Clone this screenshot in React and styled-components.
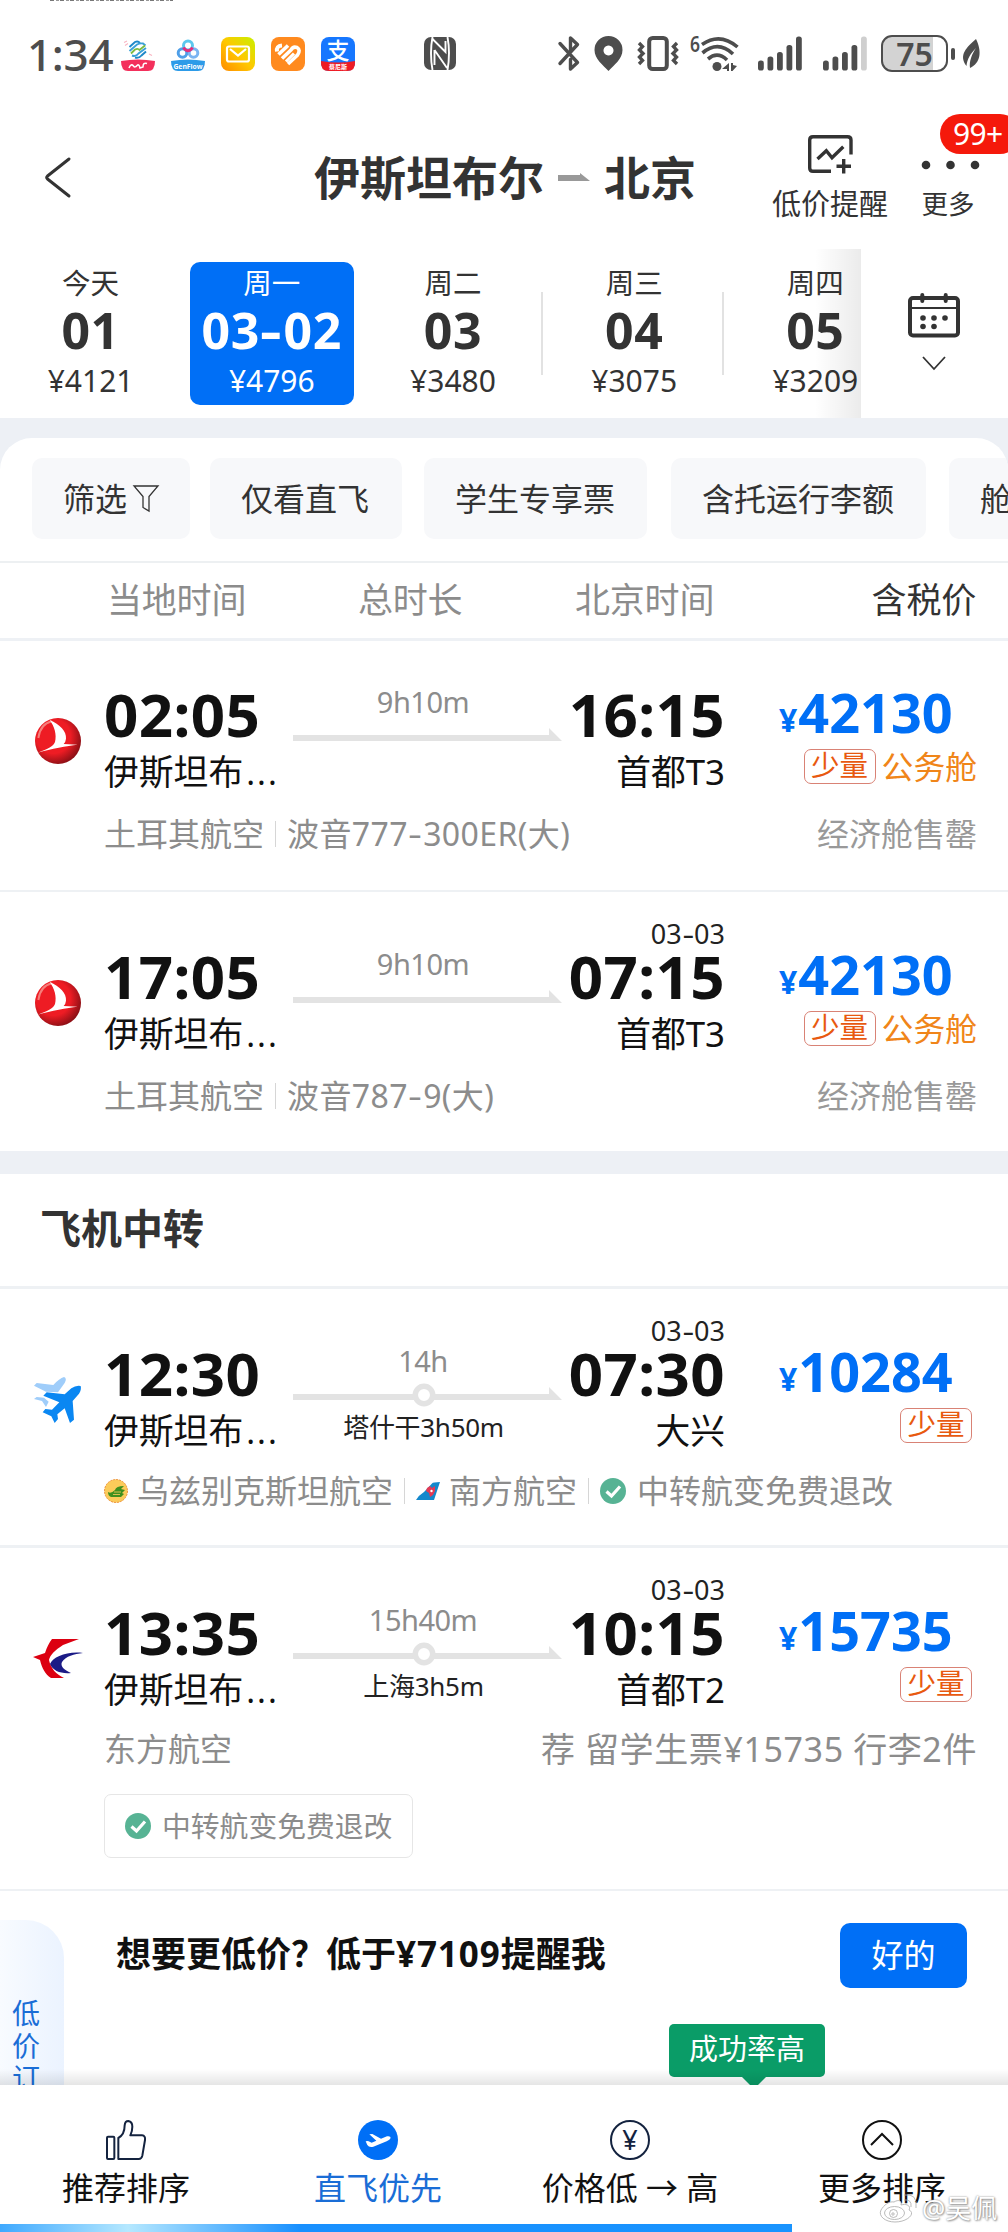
import React from 'react'
import styled, { createGlobalStyle } from 'styled-components'

const GlobalStyle = createGlobalStyle`
  * { box-sizing: border-box; }
  body {
    margin: 0;
    background: #fff;
    font-family: "Noto Sans", "Noto Sans CJK SC", sans-serif;
  }
  svg { display: block; flex: none; overflow: visible; }
`

const Page = styled.div`
  width: 1008px;
  height: 2232px;
  overflow: hidden;
  display: flex;
  flex-direction: column;
  background: #fff;
  color: #111;
  white-space: nowrap;
`

/* ---------- status bar ---------- */

const TopSliver = styled.div`
  width: 123px;
  height: 1px;
  margin-left: 50px;
  background: repeating-linear-gradient(90deg, #777 0 4px, #fff 4px 6px, #999 6px 9px, #fff 9px 10px);
`

const StatusBar = styled.div`
  height: 105px;
  padding: 0 28px 0 27px;
  display: flex;
  align-items: center;
  color: #4d4d4d;
`

const Clock = styled.div`
  width: 94px;
  font-size: 44px;
  font-weight: 500;
  line-height: 60px;
  letter-spacing: -0.3px;
`

const AppIcons = styled.div`
  display: flex;
  gap: 16px;
`

const Push = styled.div`
  margin-left: ${p => p.$left}px;
`

const Battery = styled.div`
  width: 67px;
  height: 37px;
  margin-left: 14px;
  border: 2.5px solid #4d4d4d;
  border-radius: 11px;
  background: linear-gradient(90deg, #d3d3d3 50px, #fff 50px);
  display: flex;
  align-items: center;
  justify-content: center;
  font-size: 32px;
  font-weight: 600;
  line-height: 32px;
`

const BatteryNub = styled.div`
  width: 4px;
  height: 12px;
  margin: 0 7px 0 3px;
  border-radius: 2px;
  background: #4d4d4d;
`

/* ---------- header ---------- */

const Header = styled.div`
  height: 143px;
  display: grid;
  grid-template-columns: 314px 382px 1fr;
`

const Back = styled.div`
  padding: 51px 0 0 45px;
`

const Title = styled.div`
  height: 142px;
  display: flex;
  align-items: center;
  gap: 14px;
  font-size: 46px;
  font-weight: 700;
  line-height: 60px;
  color: #333;
`

const Actions = styled.div`
  display: flex;
  padding: 28px 0 0 76px;
  color: #333;
`

const Action = styled.div`
  position: relative;
  width: ${p => p.$width}px;
  margin-right: 29px;
  display: flex;
  flex-direction: column;
  align-items: center;
  font-size: ${p => p.$size}px;
  line-height: 40px;
`

const ActionIcon = styled.div`
  height: 40px;
  margin-bottom: 10px;
  display: flex;
  align-items: center;
`

const Badge = styled.div`
  position: absolute;
  left: 23px;
  top: -20px;
  width: 80px;
  height: 40px;
  padding-left: 13px;
  border-radius: 20px;
  background: #f5190b;
  color: #fff;
  font-size: 30px;
  line-height: 40px;
  letter-spacing: -0.7px;
`

/* ---------- dates ---------- */

const DateStrip = styled.div`
  height: 169px;
  display: flex;
`

const Days = styled.div`
  position: relative;
  width: 861px;
  overflow: hidden;
  display: flex;
  &::after {
    content: '';
    position: absolute;
    right: 0;
    top: 0;
    width: 46px;
    height: 169px;
    background: linear-gradient(90deg, rgba(0, 0, 0, 0), rgba(0, 0, 0, 0.08));
  }
`

const DayCell = styled.div`
  flex: none;
  width: 181.2px;
  padding-top: 13px;
  display: flex;
  justify-content: center;
`

const Day = styled.div`
  width: 164px;
  height: 143px;
  border-radius: 10px;
  background: ${p => (p.$active ? '#006ff6' : 'transparent')};
  color: ${p => (p.$active ? '#fff' : '#333')};
  text-align: center;
`

const DayDivider = styled.div`
  flex: none;
  width: 2px;
  height: 83px;
  margin: 43px 1px 0 -3px;
  background: #e2e2e2;
`

const Weekday = styled.div`
  font-size: 28.5px;
  line-height: 42px;
`

const DayNumber = styled.div`
  font-size: 50px;
  font-weight: 700;
  line-height: 52px;
  letter-spacing: 0.6px;
`

const DayPrice = styled.div`
  font-size: 30px;
  line-height: 50px;
`

const Dash = styled.span`
  display: inline-block;
  transform: scaleX(1.35);
  margin: 0 0.07em;
`

const CalendarButton = styled.div`
  width: 147px;
  padding: 44px 2px 0 0;
  display: flex;
  flex-direction: column;
  align-items: center;
  gap: 18px;
`

/* ---------- filters ---------- */

const Backdrop = styled.div`
  padding-top: 20px;
  background: #edf0f5;
`

const Filters = styled.div`
  height: 125px;
  padding: 20px 0 0 32px;
  display: flex;
  overflow: hidden;
  background: #fff;
  border-radius: 32px 32px 0 0;
  border-bottom: 2px solid #edf0f2;
`

const Chip = styled.div`
  flex: none;
  width: ${p => p.$width}px;
  height: 81px;
  margin-right: ${p => p.$gap}px;
  padding-left: 31px;
  display: flex;
  align-items: center;
  gap: 6px;
  border-radius: 10px;
  background: #f7f8fa;
  color: #333;
  font-size: 32px;
  line-height: 80px;
`

const Columns = styled.div`
  height: 78px;
  padding: 0 32px 0 107px;
  display: grid;
  grid-template-columns: 251px 217px 1fr auto;
  border-bottom: 3px solid #eef1f5;
  font-size: 35px;
  line-height: 74px;
  letter-spacing: -0.2px;
  color: #8c8c8c;
`

const PriceHead = styled.span`
  color: #333;
`

/* ---------- flights ---------- */

const Flight = styled.div`
  height: ${p => p.$height}px;
  padding: ${p => p.$top}px 31px 0 0;
  border-bottom: ${p => p.$line}px solid #eef1f4;
`

const Main = styled.div`
  display: flex;
  height: 141px;
`

const LogoBox = styled.div`
  width: 104px;
  height: 141px;
  padding: 25px 0 0 11px;
  display: flex;
  align-items: center;
  justify-content: center;
`

const Depart = styled.div`
  width: 189px;
  padding-top: 27px;
`

const Arrive = styled.div`
  width: 164px;
  text-align: right;
`

const ArriveDate = styled.div`
  height: 27px;
  font-size: 27px;
  line-height: 28px;
  color: #222;
`

const Time = styled.div`
  font-size: 60px;
  font-weight: 700;
  line-height: 59px;
  letter-spacing: 0.4px;
`

const City = styled.div`
  font-size: 34.8px;
  line-height: 55px;
`

const Dots = styled.span`
  margin-left: 3px;
  font-size: 33px;
  letter-spacing: 2px;
`

const Route = styled.div`
  width: 268px;
  padding-top: 29px;
`

const Duration = styled.div`
  padding-right: 8px;
  font-size: 29px;
  line-height: 30px;
  letter-spacing: -0.5px;
  text-align: center;
  color: #8c8c8c;
`

const Stop = styled.div`
  padding-right: 7px;
  font-size: 26px;
  line-height: 34px;
  letter-spacing: -0.3px;
  text-align: center;
  color: #222;
`

const Cost = styled.div`
  flex: 1;
  padding: 24px 0 0 54px;
`

const Price = styled.div`
  font-size: 54px;
  font-weight: 700;
  line-height: 60px;
  color: #006ff6;
`

const Yen = styled.span`
  position: relative;
  top: -1px;
  margin-right: 1px;
  font-size: 32px;
  line-height: 1;
`

const Tags = styled.div`
  height: 35px;
  margin: 7px ${p => p.$right}px 0 0;
  display: flex;
  justify-content: flex-end;
  align-items: center;
  gap: 6px;
  font-size: 31.8px;
  line-height: 32px;
  color: #f08519;
`

const Few = styled.span`
  width: 72px;
  height: 35px;
  border: 1px solid #d98275;
  border-radius: 7px;
  font-size: 28.5px;
  line-height: 31px;
  text-align: center;
  color: #e8590f;
`

const Detail = styled.div`
  margin: ${p => p.$gap}px 0 0 104px;
  height: 40px;
  display: flex;
  align-items: center;
  font-size: 32px;
  line-height: 40px;
  color: #8c8c8c;
`

const Aircraft = styled.span`
  letter-spacing: 0.4px;
`

const Bar = styled.i`
  width: 1px;
  height: 26px;
  margin: 0 ${p => p.$side}px;
  background: #d6d6d6;
`

const Gap = styled.span`
  width: ${p => p.$w}px;
`

const Right = styled.span`
  margin-left: auto;
  font-size: ${p => p.$size || 32}px;
  letter-spacing: ${p => p.$track || 0}px;
  color: ${p => p.$color || '#8c8c8c'};
`

const Guarantee = styled.div`
  width: 309px;
  height: 64px;
  margin: 25px 0 0 104px;
  padding-left: 20px;
  display: flex;
  align-items: center;
  gap: 11px;
  border: 1.5px solid #e6e6e6;
  border-radius: 7px;
  font-size: 28.8px;
  line-height: 60px;
  color: #8c8c8c;
`

const Band = styled.div`
  height: 23px;
  background: #edf0f5;
`

const SectionTitle = styled.div`
  height: 115px;
  padding-left: 40px;
  border-bottom: 3px solid #eef1f4;
  font-size: 41px;
  font-weight: 700;
  line-height: 109px;
  color: #333;
`

/* ---------- price alert ---------- */

const Alert = styled.div`
  position: relative;
  height: 194px;
  overflow: hidden;
  padding: 32px 41px 0 116px;
  display: flex;
  justify-content: space-between;
  align-items: flex-start;
  &::after {
    content: '';
    position: absolute;
    left: 0;
    right: 0;
    bottom: 0;
    height: 16px;
    background: linear-gradient(rgba(0, 0, 0, 0), rgba(0, 0, 0, 0.1));
  }
`

const AlertText = styled.div`
  font-size: 35px;
  font-weight: 700;
  line-height: 62px;
`

const AlertPrice = styled.span`
  letter-spacing: 0.9px;
`

const OkButton = styled.div`
  width: 127px;
  height: 65px;
  border-radius: 10px;
  background: #006ff6;
  color: #fff;
  font-size: 32px;
  line-height: 63px;
  text-align: center;
`

const Tip = styled.div`
  position: absolute;
  left: 669px;
  top: 133px;
  width: 156px;
  height: 53px;
  border-radius: 5px;
  background: #0a9c67;
  color: #fff;
  font-size: 29px;
  line-height: 50px;
  text-align: center;
  &::after {
    content: '';
    position: absolute;
    left: 72px;
    top: 52px;
    border: 13px solid transparent;
    border-top-color: #0a9c67;
  }
`

const SideTab = styled.div`
  position: absolute;
  left: 0;
  top: 29px;
  width: 64px;
  height: 220px;
  padding: 77px 0 0 12px;
  border-radius: 0 38px 0 0;
  background: linear-gradient(90deg, #f8fbff, #ebf3ff);
  color: #1a6dd6;
  font-size: 28px;
  line-height: 32.5px;
`

/* ---------- bottom bar ---------- */

const SortBar = styled.div`
  position: relative;
  height: 139px;
  display: grid;
  grid-template-columns: repeat(4, 252px);
`

const Sort = styled.div`
  padding-top: 35px;
  display: flex;
  flex-direction: column;
  align-items: center;
  font-size: 32px;
  color: ${p => (p.$active ? '#1a6dd6' : '#111')};
`

const SortLabel = styled.div`
  margin-top: 8px;
  line-height: 40px;
`

const YenCircle = styled.div`
  width: 40px;
  height: 40px;
  border: 2px solid #14233f;
  border-radius: 50%;
  color: #14233f;
  font-size: 27px;
  line-height: 35px;
  text-align: center;
`

const Watermark = styled.div`
  position: absolute;
  left: 880px;
  top: 105px;
  display: flex;
  align-items: center;
  gap: 5px;
  color: #fff;
  font-size: 26px;
  line-height: 36px;
  text-shadow: 0 0 2px #888, 1px 1px 2px #999;
`

const Progress = styled.div`
  width: 792px;
  height: 8px;
  background: linear-gradient(90deg, #3fa9ff 0, #b5e8ff 128px, #1890ff 300px, #1994ff 792px);
`

/* ---------- icons ---------- */

const MobileIcon = () => (
  <svg width="34" height="34" viewBox="0 0 34 34">
    <g fill="none" strokeWidth="1.900">
      <path d="M8.500 10 L14 5 Q17 3.500 19 6" stroke="#1e88c8" />
      <path d="M8.500 14 L16 7.500 Q19 6 22 6.500 L24.500 8.500" stroke="#3aa0d8" />
      <path d="M10 16.500 L14 12.500 Q17 11 18.500 13 L24 8.500" stroke="#7dbb42" />
      <path d="M11 18.500 Q15 20 17.500 16.500 L25 11" stroke="#3aa0d8" />
      <path d="M14 20.500 Q18 21.500 20.500 18.500 L25 14.500" stroke="#1e88c8" />
    </g>
    <path d="M3 5.500 L6 4 M4 8.500 L7 6.500 M28 17 L31 18.500" stroke="#f9b5c2" strokeWidth="1.100" />
    <path d="M0 24 Q17 21 34 24 Q34 34 27 34 H7 Q0 34 0 24Z" fill="#f3305c" />
    <path d="M8 31 Q10 26 12.500 29 Q14 31 16 28.500 Q18 26.500 19 31 L22 30 Q22 25 26 26.500" fill="none" stroke="#fff" strokeWidth="1.500" />
  </svg>
)

const GenflowIcon = () => (
  <svg width="34" height="34" viewBox="0 0 34 34">
    <g fill="none" strokeWidth="3">
      <circle cx="17" cy="8.500" r="4.500" stroke="#5cc8ee" />
      <circle cx="11.500" cy="16" r="4.300" stroke="#4f9fe8" />
      <circle cx="22.500" cy="16" r="4.300" stroke="#7bb4f2" />
      <path d="M12.500 10.500 Q17 17 21.500 10.500" stroke="#e4307c" />
    </g>
    <path d="M0 24 Q17 21 34 24 Q34 34 27 34 H7 Q0 34 0 24Z" fill="#2d9be8" />
    <text x="17" y="32" fontSize="6.800" fontWeight="700" fill="#fff" textAnchor="middle">GenFlow</text>
  </svg>
)

const MailIcon = () => (
  <svg width="34" height="34" viewBox="0 0 34 34">
    <defs>
      <linearGradient id="mail" x1="1" y1="0" x2="0" y2="1">
        <stop offset="0" stopColor="#c8f000" />
        <stop offset="0.500" stopColor="#ffc800" />
        <stop offset="1" stopColor="#ff8a00" />
      </linearGradient>
    </defs>
    <rect width="34" height="34" rx="8" fill="url(#mail)" />
    <rect x="6" y="9.500" width="22" height="15" rx="2" fill="none" stroke="#fff" strokeWidth="2.200" />
    <path d="M9 12 L17 18.500 L25 12" fill="none" stroke="#fff" strokeWidth="2.200" />
  </svg>
)

const HeartIcon = () => (
  <svg width="34" height="34" viewBox="0 0 34 34">
    <rect width="34" height="34" rx="8" fill="#ff8a1f" />
    <g fill="none" stroke="#fff" strokeWidth="3.600">
      <path d="M6 14.500 Q5 9 11 8.500" strokeWidth="4" />
      <path d="M7.500 17.500 L17 8.500" />
      <path d="M11 21.500 L20 13 Q22 9 26 10.500 Q30 13 26.500 18 L17 27" />
      <path d="M15 24.500 L23 16.500" strokeWidth="3" />
    </g>
  </svg>
)

const AlipayIcon = () => (
  <svg width="34" height="34" viewBox="0 0 34 34">
    <rect width="34" height="34" rx="8" fill="#1677ff" />
    <text x="17" y="21.500" fontSize="23" fontWeight="500" fill="#fff" textAnchor="middle">支</text>
    <path d="M0 24 Q17 27 34 24 Q35 34 26 34 H8 Q-1 34 0 24Z" fill="#ee1c25" />
    <text x="17" y="32.200" fontSize="6" fontWeight="700" fill="#fff" textAnchor="middle">蔡尼斯</text>
  </svg>
)

const NfcIcon = () => (
  <svg width="32" height="33" viewBox="0 0 32 33">
    <rect width="32" height="33" rx="7" fill="#4d4d4d" />
    <g fill="none" stroke="#fff" strokeWidth="1.900">
      <path d="M8.500 0 Q5.500 16 8.500 33" />
      <path d="M23.500 0 Q26.500 16 23.500 33" />
      <path d="M8.500 2 L21.500 15 V4 M10.500 13 L23 31 M10.500 13 V28" />
    </g>
  </svg>
)

const BluetoothIcon = () => (
  <svg width="22" height="35" viewBox="0 0 22 35" fill="none" stroke="#4d4d4d" strokeWidth="3.400" strokeLinecap="round" strokeLinejoin="round">
    <path d="M2 7.500 L19.500 26.500 L12.500 33 V23.500 M2 27.500 L19.500 8.500 L12.500 2 V14" />
  </svg>
)

const PinIcon = () => (
  <svg width="29" height="35" viewBox="0 0 29 35">
    <path fillRule="evenodd" fill="#4d4d4d" d="M14.500 0 A14 14 0 0 1 28.500 14 C28.500 23 20 29 14.500 35 C9 29 0.500 23 0.500 14 A14 14 0 0 1 14.500 0Z M14.500 9.500 a5 5 0 1 0 0.010 0Z" />
  </svg>
)

const VibrateIcon = () => (
  <svg width="42" height="35" viewBox="0 0 42 35" fill="none" stroke="#4d4d4d">
    <rect x="12.200" y="2" width="17.600" height="31" rx="3.500" strokeWidth="4" />
    <path d="M2 7 L5.500 10.500 L2.500 14 L6 17.500 L2.500 21 L5.500 24.500 L2 28 M40 7 L36.500 10.500 L39.500 14 L36 17.500 L39.500 21 L36.500 24.500 L40 28" strokeWidth="3.400" />
  </svg>
)

const WifiIcon = () => (
  <svg width="49" height="36" viewBox="0 0 49 36">
    <text x="-1" y="16" fontSize="21" fontWeight="600" fill="#4d4d4d" textLength="10" lengthAdjust="spacingAndGlyphs">6</text>
    <g fill="none" stroke="#4d4d4d" strokeWidth="3.600">
      <path d="M11 8.500 Q29 -4 46.500 11" />
      <path d="M11.500 17 Q27 4 42 18" />
      <path d="M17 23 Q26.500 15 36 24" />
    </g>
    <circle cx="26" cy="30.500" r="4.500" fill="#4d4d4d" />
    <path fill="#4d4d4d" d="M31 33 L38 27 V35 H36 V33Z M40 27 H42 V29 L46 30 L41.500 35 H40Z" />
  </svg>
)

const Signal = ({ faded }) => (
  <svg width="44" height="35" viewBox="0 0 44 35">
    {[10, 14, 18.500, 25.500, 34].map((h, i) => (
      <rect key={h} x={i * 9.500} y={34.500 - h} width="5.800" height={h} rx="2.600" fill={faded && i === 4 ? '#cfcfcf' : '#4d4d4d'} />
    ))}
  </svg>
)

const LeafIcon = () => (
  <svg width="18" height="30" viewBox="0 0 18 30">
    <path d="M14 0 C20 12 19 24 8 29 C7 22 10 15 14 9 C9 14 5 20 4.500 27 C-4 16 5 8 14 0Z" fill="#4d4d4d" />
  </svg>
)

const AlertIcon = () => (
  <svg width="45" height="39" viewBox="0 0 45 39" fill="none" stroke="#333" strokeWidth="3.400">
    <path d="M43 19.500 V5 Q43 1.700 39.500 1.700 H5 Q1.700 1.700 1.700 5 V33 Q1.700 36.300 5 36.300 H23" />
    <path d="M9.500 24 L18.300 15.700 L24 22.700 L35.300 11.700" />
    <path d="M35.700 24 V38.500 M28.500 31.200 H43" />
  </svg>
)

const CalendarIcon = () => (
  <svg width="52" height="45" viewBox="0 0 52 45" fill="#333">
    <rect x="2" y="5" width="48" height="37.500" rx="3" fill="none" stroke="#333" strokeWidth="4" />
    <path d="M2 15 H50" stroke="#333" strokeWidth="2" />
    <path d="M14.300 2 V8 M37.700 2 V8" stroke="#333" strokeWidth="4" strokeLinecap="round" />
    <circle cx="15" cy="25" r="2.800" />
    <circle cx="26" cy="25" r="2.800" />
    <circle cx="37" cy="25" r="2.800" />
    <circle cx="15" cy="33.500" r="2.800" />
    <circle cx="26" cy="33.500" r="2.800" />
  </svg>
)

const TurkishLogo = () => (
  <svg width="46" height="46" viewBox="0 0 138 138">
    <defs>
      <radialGradient id="tk" cx="0.400" cy="0.400" r="0.620">
        <stop offset="0.600" stopColor="#ee1c24" />
        <stop offset="1" stopColor="#8f1016" />
      </radialGradient>
    </defs>
    <circle cx="69" cy="69" r="69" fill="url(#tk)" />
    <path d="M10 60 Q16 18 50 10" fill="none" stroke="#f8a8a0" strokeWidth="6" opacity="0.700" />
    <path fill="#fff" d="M44 6 C75 20 95 40 93 62 Q92 72 86 78 L128 80 C95 84 50 92 8 104 C40 92 55 85 60 72 C66 50 58 25 44 6Z" />
  </svg>
)

const PlanesLogo = () => (
  <svg width="47" height="46" viewBox="0 0 141 138">
    <path fill="#9fcdfa" d="M0 26 L8 18 L58 24 Q76 4 90 0 Q100 4 92 18 L72 46 L36 44Z M0 66 L8 60 L30 62 L44 74 L36 90 L24 72Z" />
    <path fill="#0a87f2" d="M112 34 Q126 24 140 27 Q143 38 135 50 L116 72 L120 128 L108 138 L92 94 L70 112 L72 126 L62 138 L52 118 L26 106 L34 96 L54 98 L76 76 L28 56 L38 46 L92 52Z" />
  </svg>
)

const EasternLogo = () => (
  <svg width="50" height="40" viewBox="0 0 50 40">
    <path fill="#dc0011" d="M19 0 H46 L30 6 C22 11 17 16 16 21 C18 30 23 35 31 39 H18 C12 35 9 29 7 21 L0 18 L12 14 C14 8 16 4 19 0Z" />
    <path fill="#1b1b86" d="M50 14 C34 12 20 18 17 25 C20 32 28 35 38 34 C31 31 27 27 29 23 C33 17 41 15 50 14Z" />
  </svg>
)

const UzbekLogo = () => (
  <svg width="24" height="24" viewBox="0 0 24 24">
    <circle cx="12" cy="12" r="11.500" fill="#fbcb5a" stroke="#ee9440" strokeWidth="1" strokeDasharray="2 1" />
    <path fill="#3f8f1d" d="M4 13 Q7 15 11 11 Q12 7 20 7 L17 10 L21 11 L18 14 L20 15 L17 18 H7 Q4 17 4 13Z" />
    <path d="M10 13 H17 M9 15.500 H16" stroke="#fbcb5a" strokeWidth="0.800" />
  </svg>
)

const SouthernLogo = () => (
  <svg width="24" height="18" viewBox="0 0 24 18">
    <path fill="#1488cc" d="M0 18 Q3 13 8 10 L16 1.500 Q17 0 24 0 L18 18Z" />
    <path fill="#e33a55" d="M11 6 L14 4 L16 6 L19 4 L19 9 L17 13 L14 15 L13 11 L10 9Z" />
    <circle cx="15.500" cy="9" r="1.200" fill="#fff" />
  </svg>
)

const CheckIcon = () => (
  <svg width="26" height="26" viewBox="0 0 26 26">
    <circle cx="13" cy="13" r="13" fill="#57b394" />
    <path d="M6.500 13.500 L11.500 18 L20 8.500" fill="none" stroke="#fff" strokeWidth="3.200" />
  </svg>
)

const RouteLine = ({ stop }) => (
  <svg width="268" height="34" viewBox="0 0 268 34">
    <path d="M0 18 H256 V11 L269 24 H0Z" fill="#e3e3e3" />
    {stop && <circle cx="131" cy="19" r="8.700" fill="#fff" stroke="#e3e3e3" strokeWidth="5.500" />}
  </svg>
)

const ThumbIcon = () => (
  <svg width="40" height="40" viewBox="0 0 120 120" fill="none" stroke="#14233f" strokeWidth="6" strokeLinejoin="round">
    <rect x="3" y="50" width="22" height="67" rx="3" />
    <path d="M37 117 V54 Q56 44 56 16 Q57 3 67 3 Q79 5 79 20 Q79 34 73 46 H108 Q119 47 117 60 L109 107 Q107 117 98 117Z" />
  </svg>
)

const DirectIcon = () => (
  <svg width="40" height="40" viewBox="0 0 120 120">
    <circle cx="60" cy="60" r="60" fill="#006ff6" />
    <path fill="#fff" d="M23 64 L30 63 L41 68 L55 62 L34 43 L43 42 L69 56 L87 49 Q98 47 98 54 Q96 60 86 64 L46 80 Q33 83 28 75Z" />
  </svg>
)

const MoreIcon = () => (
  <svg width="40" height="40" viewBox="0 0 40 40" fill="none" stroke="#111" strokeWidth="2">
    <circle cx="20" cy="20" r="19" />
    <path d="M9 25 L20 14 L31 25" />
  </svg>
)

const WeiboIcon = () => (
  <svg width="37" height="30" viewBox="0 0 37 30" fill="#fff" stroke="#aaa" strokeWidth="0.800">
    <path d="M14 9 C19 6 22 8 21 12 C28 10 31 14 29 17 C36 20 28 29 15 29 C5 29 -2 23 1 17 C4 12 9 8 14 9Z" />
    <ellipse cx="14.500" cy="20" rx="10" ry="6.500" />
    <circle cx="13.500" cy="20.500" r="4" />
    <circle cx="13" cy="21" r="1.200" />
    <path d="M24 7 Q32 6 31 14 M24 2 Q38 0 36 15" fill="none" />
  </svg>
)

/* ---------- data ---------- */

const days = [
  { name: '今天', num: '01', price: '¥4121' },
  { name: '周一', num: '03-02', price: '¥4796', active: true },
  { name: '周二', num: '03', price: '¥3480', divider: true },
  { name: '周三', num: '04', price: '¥3075', divider: true },
  { name: '周四', num: '05', price: '¥3209' },
]

// widens every hyphen of a string
const dashed = text =>
  text.split('-').map((part, i) => (
    <React.Fragment key={i}>
      {i > 0 && <Dash>-</Dash>}
      {part}
    </React.Fragment>
  ))

const FlightMain = ({ logo, dep, duration, stop, date, arr, airport, price, cabin }) => (
  <Main>
    <LogoBox>{logo}</LogoBox>
    <Depart>
      <Time>{dep}</Time>
      <City>伊斯坦布<Dots>...</Dots></City>
    </Depart>
    <Route>
      <Duration>{duration}</Duration>
      <RouteLine stop={stop} />
      <Stop>{stop}</Stop>
    </Route>
    <Arrive>
      <ArriveDate>{date && dashed(date)}</ArriveDate>
      <Time>{arr}</Time>
      <City>{airport}</City>
    </Arrive>
    <Cost>
      <Price><Yen>¥</Yen>{price}</Price>
      <Tags $right={cabin ? 0 : 5}>
        <Few>少量</Few>
        {cabin}
      </Tags>
    </Cost>
  </Main>
)

const App = () => (
  <Page>
    <GlobalStyle />
    <TopSliver />
    <StatusBar>
      <Clock>1:34</Clock>
      <AppIcons>
        <MobileIcon />
        <GenflowIcon />
        <MailIcon />
        <HeartIcon />
        <AlipayIcon />
      </AppIcons>
      <Push $left={69}><NfcIcon /></Push>
      <Push $left={102}><BluetoothIcon /></Push>
      <Push $left={14}><PinIcon /></Push>
      <Push $left={14}><VibrateIcon /></Push>
      <Push $left={12}><WifiIcon /></Push>
      <Push $left={18}><Signal /></Push>
      <Push $left={21}><Signal faded /></Push>
      <Battery>75</Battery>
      <BatteryNub />
      <LeafIcon />
    </StatusBar>

    <Header>
      <Back>
        <svg width="26" height="41" viewBox="0 0 26 41" fill="none" stroke="#333" strokeWidth="3" strokeLinecap="round" strokeLinejoin="round">
          <path d="M24 2 L2.500 19 Q1 20.500 2.500 22 L24 39" />
        </svg>
      </Back>
      <Title>
        伊斯坦布尔
        <svg width="32" height="8" viewBox="0 0 32 8">
          <path d="M0 2 H22 V0 L32 8 H0Z" fill="#999" />
        </svg>
        北京
      </Title>
      <Actions>
        <Action $width={116} $size={29}>
          <ActionIcon><AlertIcon /></ActionIcon>
          低价提醒
        </Action>
        <Action $width={62} $size={26.500}>
          <ActionIcon>
            <svg width="58" height="10" viewBox="0 0 58 10" fill="#333">
              <circle cx="7" cy="16" r="4.300" />
              <circle cx="31.500" cy="16" r="4.300" />
              <circle cx="56" cy="16" r="4.300" />
            </svg>
          </ActionIcon>
          更多
          <Badge>99+</Badge>
        </Action>
      </Actions>
    </Header>

    <DateStrip>
      <Days>
        {days.map(d => (
          <React.Fragment key={d.name}>
            <DayCell>
              <Day $active={d.active}>
                <Weekday>{d.name}</Weekday>
                <DayNumber>{dashed(d.num)}</DayNumber>
                <DayPrice>{d.price}</DayPrice>
              </Day>
            </DayCell>
            {d.divider && <DayDivider />}
          </React.Fragment>
        ))}
      </Days>
      <CalendarButton>
        <CalendarIcon />
        <svg width="24" height="15" viewBox="0 0 24 15" fill="none" stroke="#333" strokeWidth="1.800">
          <path d="M1 1 L12 13 L23 1" />
        </svg>
      </CalendarButton>
    </DateStrip>

    <Backdrop>
      <Filters>
        <Chip $width={158} $gap={20}>
          筛选
          <svg width="26" height="27" viewBox="0 0 26 27" fill="none" stroke="#333" strokeWidth="1.300">
            <path d="M1 1 H25 L16 11.500 V26 L10 22.500 V11.500Z" />
          </svg>
        </Chip>
        <Chip $width={192} $gap={22}>仅看直飞</Chip>
        <Chip $width={223} $gap={24}>学生专享票</Chip>
        <Chip $width={255} $gap={23}>含托运行李额</Chip>
        <Chip $width={158} $gap={0}>舱位</Chip>
      </Filters>
    </Backdrop>

    <Columns>
      <span>当地时间</span>
      <span>总时长</span>
      <span>北京时间</span>
      <PriceHead>含税价</PriceHead>
    </Columns>

    <Flight $height={251} $top={17} $line={2}>
      <FlightMain logo={<TurkishLogo />} dep="02:05" duration="9h10m" arr="16:15" airport="首都T3" price="42130" cabin="公务舱" />
      <Detail $gap={15}>
        土耳其航空
        <Bar $side={11} />
        <Aircraft>波音{dashed('777-300ER(大)')}</Aircraft>
        <Right $color="#999">经济舱售罄</Right>
      </Detail>
    </Flight>
    <Flight $height={259} $top={28} $line={0}>
      <FlightMain logo={<TurkishLogo />} dep="17:05" duration="9h10m" date="03-03" arr="07:15" airport="首都T3" price="42130" cabin="公务舱" />
      <Detail $gap={15}>
        土耳其航空
        <Bar $side={11} />
        <Aircraft>波音{dashed('787-9(大)')}</Aircraft>
        <Right $color="#999">经济舱售罄</Right>
      </Detail>
    </Flight>

    <Band />
    <SectionTitle>飞机中转</SectionTitle>

    <Flight $height={259} $top={28} $line={3}>
      <FlightMain logo={<PlanesLogo />} dep="12:30" duration="14h" stop="塔什干3h50m" date="03-03" arr="07:30" airport="大兴" price="10284" />
      <Detail $gap={13}>
        <UzbekLogo />
        <Gap $w={9} />
        乌兹别克斯坦航空
        <Bar $side={11} />
        <SouthernLogo />
        <Gap $w={9} />
        南方航空
        <Bar $side={11} />
        <CheckIcon />
        <Gap $w={11} />
        中转航变免费退改
      </Detail>
    </Flight>
    <Flight $height={343} $top={28} $line={2}>
      <FlightMain logo={<EasternLogo />} dep="13:35" duration="15h40m" stop="上海3h5m" date="03-03" arr="10:15" airport="首都T2" price="15735" />
      <Detail $gap={12}>
        东方航空
        <Right $size={34} $track={0.600}>荐 留学生票¥15735 行李2件</Right>
      </Detail>
      <Guarantee>
        <CheckIcon />
        中转航变免费退改
      </Guarantee>
    </Flight>

    <Alert>
      <AlertText>想要更低价？低于<AlertPrice>¥7109</AlertPrice>提醒我</AlertText>
      <OkButton>好的</OkButton>
      <Tip>成功率高</Tip>
      <SideTab>低<br />价<br />订</SideTab>
    </Alert>

    <SortBar>
      <Sort>
        <ThumbIcon />
        <SortLabel>推荐排序</SortLabel>
      </Sort>
      <Sort $active>
        <DirectIcon />
        <SortLabel>直飞优先</SortLabel>
      </Sort>
      <Sort>
        <YenCircle>¥</YenCircle>
        <SortLabel>价格低 → 高</SortLabel>
      </Sort>
      <Sort>
        <MoreIcon />
        <SortLabel>更多排序</SortLabel>
      </Sort>
      <Watermark>
        <WeiboIcon />
        @吴佩
      </Watermark>
    </SortBar>
    <Progress />
  </Page>
)

export default App
